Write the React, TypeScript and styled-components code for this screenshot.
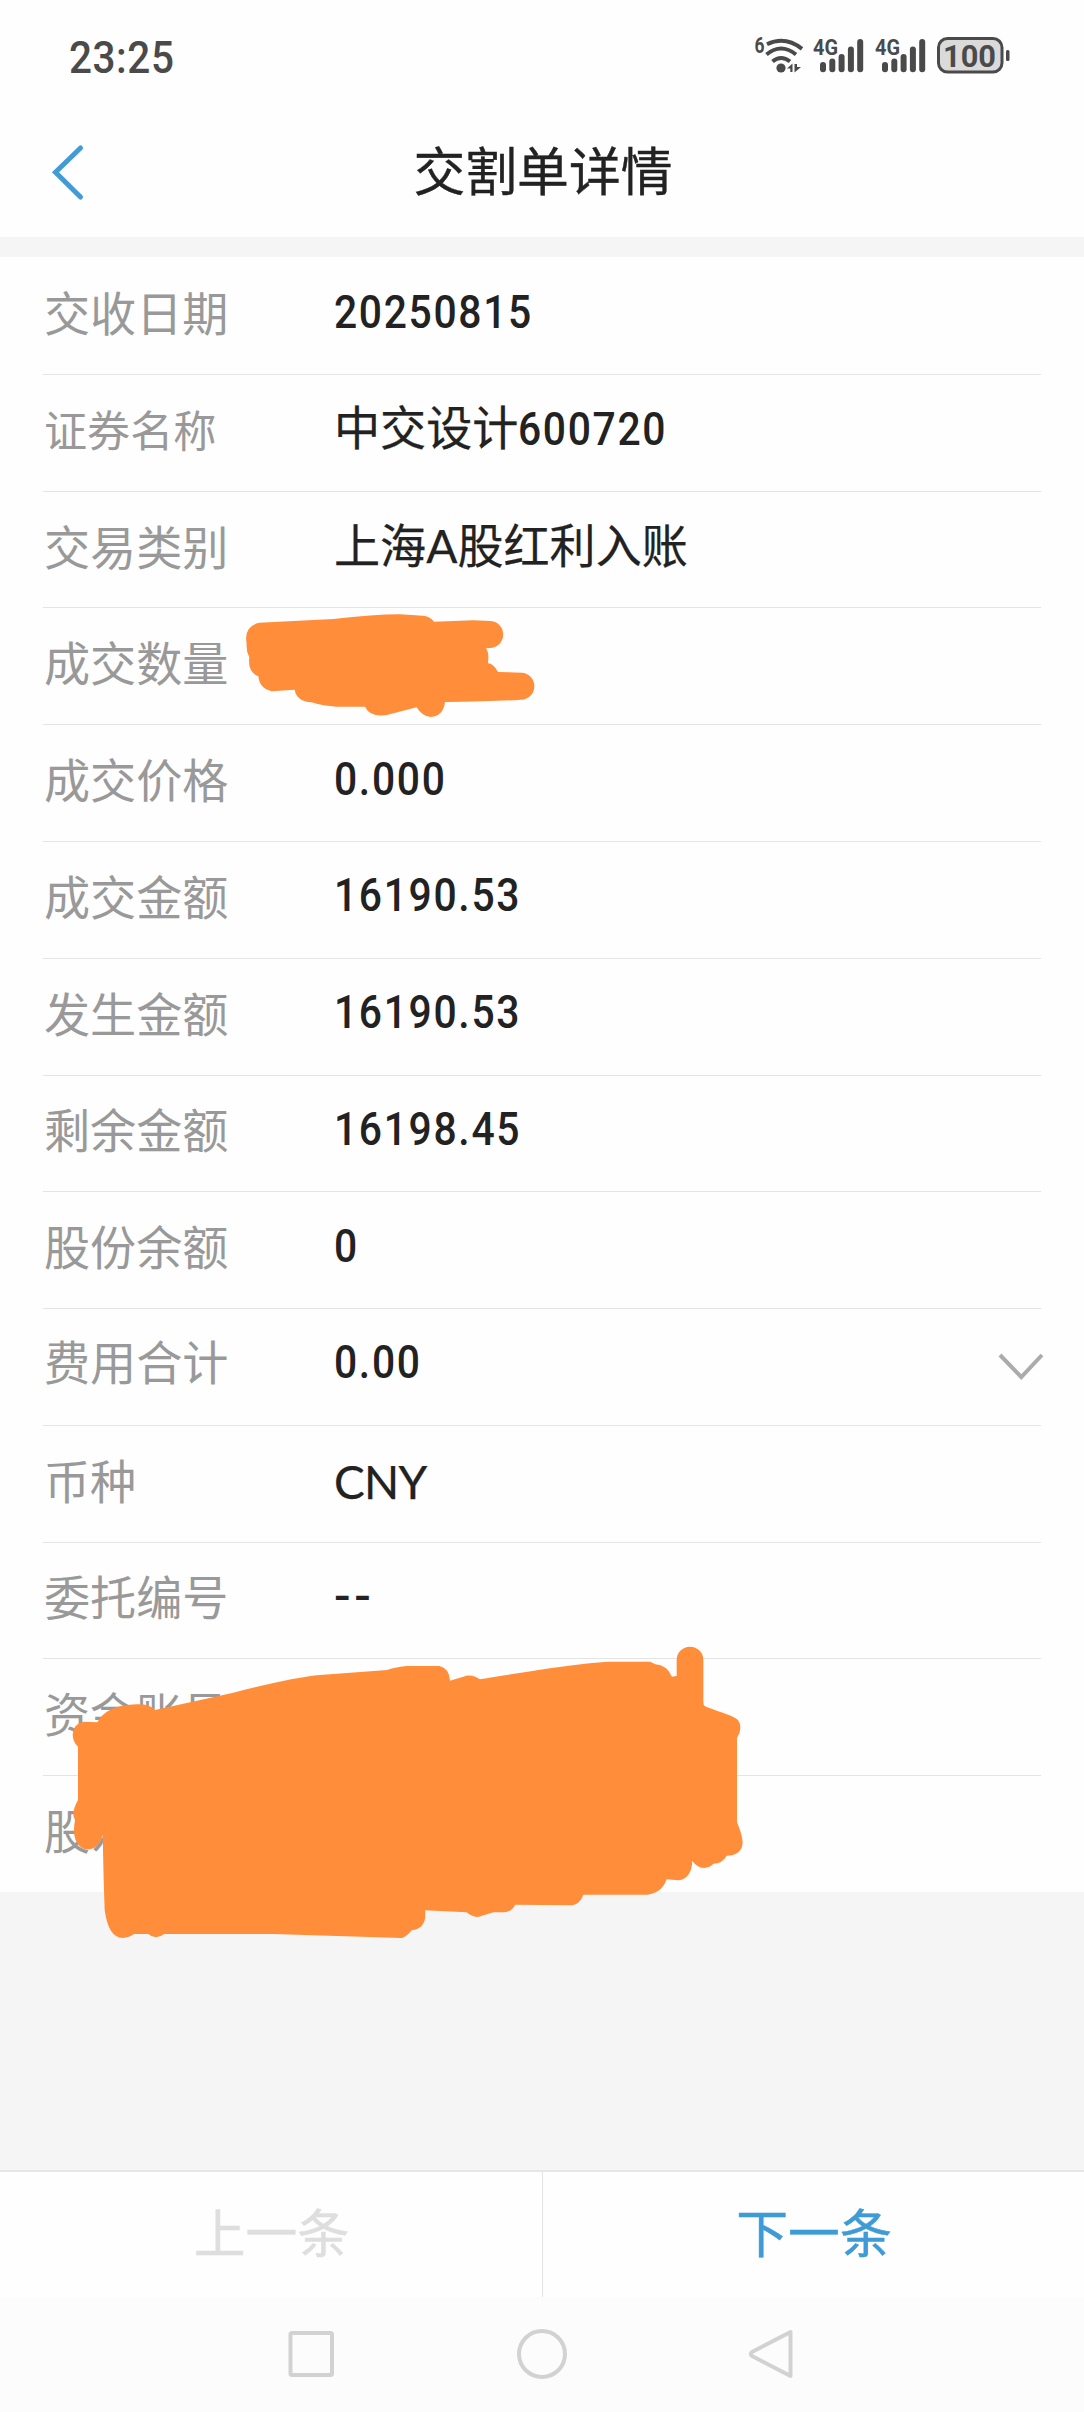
import React from "react";
import styled, { createGlobalStyle } from "styled-components";

const GlobalStyle = createGlobalStyle`
  * { box-sizing: border-box; }
  body { margin: 0; background: #fefefe; }
`;

const cjk = `"Noto Sans CJK SC", sans-serif`;

const Page = styled.div`
  position: relative;
  display: flex;
  flex-direction: column;
  width: 1084px;
  height: 2412px;
  overflow: hidden;
  background: #fefefe;
  font-family: "Lato", ${cjk};
  color: #222;
`;

const StatusBar = styled.header`
  display: flex;
  align-items: center;
  justify-content: space-between;
  height: 112px;
  padding: 0 73px 0 69px;
`;

const Clock = styled.time`
  display: inline-block;
  font: 500 43.5px/50px Roboto, sans-serif;
  color: #4a4a4a;
  padding-top: 6px;
  letter-spacing: 0.6px;
  transform: scaleX(0.93);
  transform-origin: left;
`;

const StatusIcons = styled.svg`
  display: block;
  width: 260px;
  height: 112px;
  fill: #4a4a4a;
  font-family: Roboto, sans-serif;
`;

const TitleBar = styled.nav`
  display: grid;
  grid-template-columns: 120px 1fr 120px;
  align-items: center;
  height: 125px;
  padding-bottom: 5px;
`;

const BackButton = styled.button`
  display: block;
  height: 64px;
  padding: 0 0 0 48px;
  border: 0;
  background: none;
  svg { display: block; }
`;

const Title = styled.h1`
  margin: 0;
  padding: 0 0 6px 2px;
  text-align: center;
  font: 400 51.8px/76px ${cjk};
  -webkit-text-stroke: 0.4px currentColor;
`;

const Band = styled.div`
  height: 20px;
  background: #f5f5f5;
`;

const Details = styled.dl`
  margin: 0;
  padding: 1.2px 43px 0;
  height: 1635px;
`;

const Row = styled.div`
  display: grid;
  grid-template-columns: 291px 1fr 44px;
  align-items: center;
  height: 116.77px;
  border-bottom: 1px solid #e4e4e4;
  &:last-child { border-bottom-color: transparent; }
`;

const Label = styled.dt<{ $compact?: boolean; $lift?: number }>`
  font: 400 ${(p) => (p.$compact ? 43.1 : 46.1)}px/60px ${cjk};
  color: #999;
  white-space: nowrap;
  padding-left: 1px;
  padding-bottom: ${(p) => 10 + (p.$lift ?? 0)}px;
`;

const Value = styled.dd<{ $latin?: boolean }>`
  display: flex;
  align-items: baseline;
  margin: 0;
  padding-bottom: ${(p) => (p.$latin ? 5 : 9)}px;
  font-size: 46.1px;
  line-height: 60px;
  white-space: nowrap;
  letter-spacing: ${(p) => (p.$latin ? "-0.8px" : "normal")};
  -webkit-text-stroke: 0.25px currentColor;
`;

const Digits = styled.span<{ $dashes?: boolean }>`
  display: inline-block;
  font-family: Roboto, sans-serif;
  font-weight: 500;
  font-size: 46.4px;
  letter-spacing: ${(p) => (p.$dashes ? 3.6 : 1.9)}px;
  transform: scaleX(${(p) => (p.$dashes ? 1.05 : 0.88)});
  transform-origin: left;
  -webkit-text-stroke: 0;
`;

const Expand = styled.svg`
  display: block;
  width: 44px;
  height: 30px;
  margin: 1px 0 0 2px;
  overflow: visible;
`;

const Filler = styled.div`
  flex: 1;
  background: #f5f5f5;
`;

const Pager = styled.div`
  display: grid;
  grid-template-columns: 1fr 1fr;
  height: 127px;
  border-top: 2px solid #e6e6e6;
`;

const PagerButton = styled.button<{ $active?: boolean }>`
  border: 0;
  padding: 0 0 7px 1px;
  background: none;
  font: 400 51.8px/76px ${cjk};
  color: ${(p) => (p.$active ? "#3e9bd5" : "#dedede")};
  -webkit-text-stroke: 0.5px currentColor;
  & + & { border-left: 1px solid #e4e4e4; }
`;

const SystemNav = styled.footer`
  display: flex;
  justify-content: center;
  height: 115px;
  background: #fcfcfc;
`;

const Scribble = styled.svg<{ $x: number; $y: number; $w: number; $h: number }>`
  position: absolute;
  left: ${(p) => p.$x}px;
  top: ${(p) => p.$y}px;
  width: ${(p) => p.$w}px;
  height: ${(p) => p.$h}px;
  fill: #ff8d3a;
`;

type Item = {
  label: string;
  text?: string;
  digits?: string;
  compact?: boolean;
  expandable?: boolean;
  latin?: boolean;
  lift?: number;
};

const items: Item[] = [
  { label: "交收日期", digits: "20250815" },
  { label: "证券名称", text: "中交设计", digits: "600720", compact: true },
  { label: "交易类别", text: "上海A股红利入账" },
  { label: "成交数量" },
  { label: "成交价格", digits: "0.000" },
  { label: "成交金额", digits: "16190.53" },
  { label: "发生金额", digits: "16190.53" },
  { label: "剩余金额", digits: "16198.45" },
  { label: "股份余额", digits: "0" },
  { label: "费用合计", digits: "0.00", expandable: true, lift: 3 },
  { label: "币种", text: "CNY", latin: true },
  { label: "委托编号", digits: "--" },
  { label: "资金账号" },
  { label: "股东账号" },
];

const signalTops = [62, 58.5, 54, 46.5, 39];

function Signal({ x }: { x: number }) {
  return (
    <g>
      <text x={x} y="55" fontSize="22" fontWeight="700" textLength="25" lengthAdjust="spacingAndGlyphs">4G</text>
      {signalTops.map((top, i) => (
        <rect key={top} x={x + 7 + i * 9.3} y={top} width="6" height={72.3 - top} rx="3" />
      ))}
    </g>
  );
}

export default function App() {
  return (
    <Page>
      <GlobalStyle />
      <StatusBar>
        <Clock>23:25</Clock>
        <StatusIcons viewBox="751 0 260 112">
          <text x="754.5" y="53" fontSize="22" fontWeight="700" textLength="10" lengthAdjust="spacingAndGlyphs">6</text>
          <g fill="none" stroke="#4a4a4a" strokeWidth="4">
            <path d="M767 44.3Q785 35.500 802 48.800" />
            <path d="M766.500 54.500Q781 42.500 796 54.500" />
            <path d="M772.500 61.500Q781 54.500 790 61.500" />
          </g>
          <circle cx="781" cy="68" r="4.600" />
          <path d="M787 68.500l5.500-5v8.500h-2.200v-3.500zM794.500 64v8.500l6.500-5.500h-4v-3z" />
          <Signal x={813} />
          <Signal x={875} />
          <rect x="938.500" y="38.500" width="63.500" height="33.500" rx="9" fill="#dadada" stroke="#4a4a4a" strokeWidth="3" />
          <rect x="1006" y="50" width="3.500" height="11" rx="1.500" />
          <text x="943" y="66.800" fontSize="31" fontWeight="700" textLength="53" lengthAdjust="spacingAndGlyphs">100</text>
        </StatusIcons>
      </StatusBar>
      <TitleBar>
        <BackButton aria-label="返回">
          <svg width="40" height="64" viewBox="48 140 40 64" fill="none" stroke="#439bd6" strokeWidth="5" strokeLinecap="round">
            <path d="M80.500 148L55.500 172.300L80.500 197" />
          </svg>
        </BackButton>
        <Title>交割单详情</Title>
      </TitleBar>
      <Band />
      <Details>
        {items.map((item) => (
          <Row key={item.label}>
            <Label $compact={item.compact} $lift={item.lift}>{item.label}</Label>
            <Value $latin={item.latin}>
              {item.text}
              {item.digits && <Digits $dashes={item.digits === "--"}>{item.digits}</Digits>}
            </Value>
            {item.expandable && (
              <Expand viewBox="0 0 44 30" fill="none" stroke="#ababab" strokeWidth="4">
                <path d="M1 3L22.300 25L43 3" />
              </Expand>
            )}
          </Row>
        ))}
      </Details>
      <Filler />
      <Pager>
        <PagerButton disabled>上一条</PagerButton>
        <PagerButton $active>下一条</PagerButton>
      </Pager>
      <SystemNav>
        <svg width="1084" height="115" viewBox="0 2297 1084 115" fill="none" stroke="#d2d2d2" strokeWidth="4" strokeLinejoin="round">
          <rect x="290.500" y="2333" width="41.500" height="42" rx="1.500" />
          <circle cx="542" cy="2354" r="23" />
          <path d="M790.500 2332V2376L752 2356Q749.500 2354 752 2352Z" />
        </svg>
      </SystemNav>
      <Scribble $x={200} $y={580} $w={400} $h={160} viewBox="0 0 1200 480">
        <path d="M178 128L400 117Q520 103 600 103L668 107Q690 108 702 125L820 121L872 123A39 40 0 0 1 868 204L858 205Q868 218 864 250Q880 250 894 276L965 278A39 40 0 0 1 962 359Q880 365 735 366Q730 408 692 411Q665 408 650 382L560 405Q510 412 495 380L410 380Q370 378 335 367Q290 364 284 329L215 334Q178 325 175 289Q142 275 148 232Q138 215 140 190Q130 140 178 128Z" />
      </Scribble>
      <Scribble $x={40} $y={1620} $w={760} $h={340} viewBox="0 0 2280 1020">
        <path d="M172 307L130 305Q98 312 98 345Q100 368 114 380L114 540Q92 580 105 600Q92 670 135 688Q175 692 188 645L191 780L194 870Q205 953 248 954Q268 953 282 942L325 942Q347 962 372 942L700 942L1085 954Q1100 950 1115 931Q1162 925 1155 871L1280 877Q1295 890 1312 891Q1330 887 1360 877L1392 877Q1415 875 1426 854L1597 856Q1620 852 1630 824L1822 824Q1865 820 1880 778L1915 781Q1955 775 1957 722Q1970 742 1992 744Q2010 742 2020 731Q2048 730 2060 707Q2108 705 2108 665Q2105 640 2091 607L2091 353Q2110 325 2094 300Q2082 288 2030 272Q2000 262 1994 258Q1990 255 1990 245L1990 120A40 40 0 0 0 1910 120L1910 168L1896 170Q1880 135 1846 133L1830 125L1710 125Q1650 127 1530 145Q1400 165 1320 178Q1295 160 1270 170L1230 182Q1228 145 1198 138L1100 138Q1060 142 1042 150L840 165Q760 172 580 218L345 270Q330 252 290 253Q200 255 172 307Z" />
      </Scribble>
    </Page>
  );
}
